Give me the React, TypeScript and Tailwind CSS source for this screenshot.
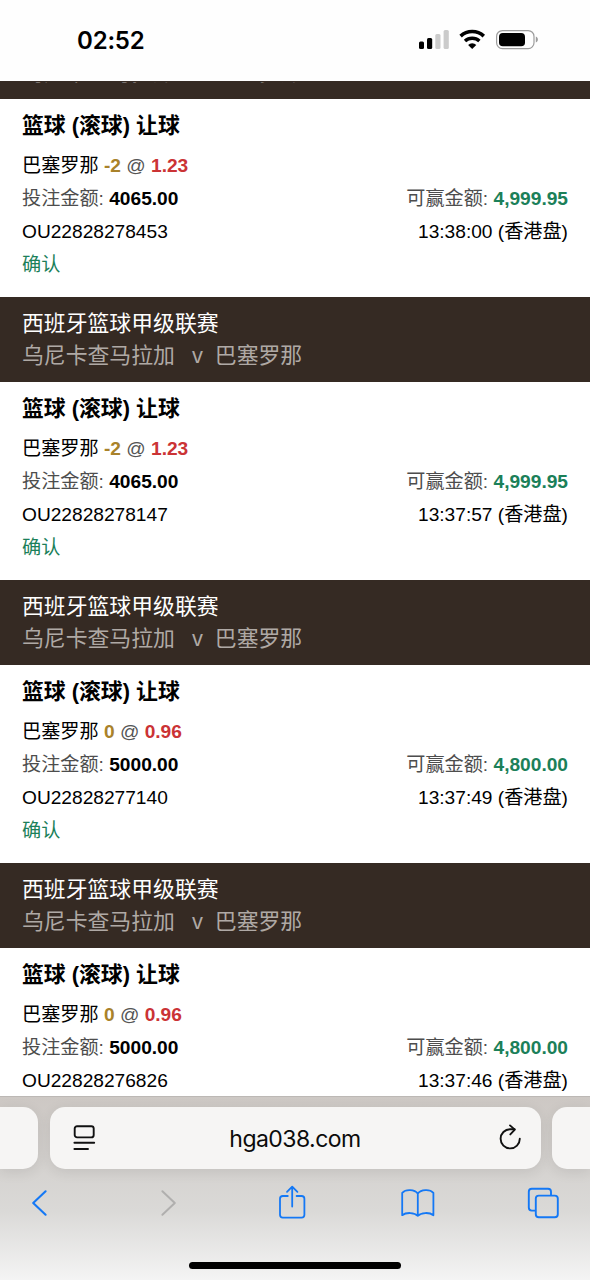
type Bet = {
  id: string;
  handicap: string;
  odds: string;
  stake: string;
  win: string;
  time: string;
};

const bets: Bet[] = [
  { id: "OU22828278453", handicap: "-2", odds: "1.23", stake: "4065.00", win: "4,999.95", time: "13:38:00" },
  { id: "OU22828278147", handicap: "-2", odds: "1.23", stake: "4065.00", win: "4,999.95", time: "13:37:57" },
  { id: "OU22828277140", handicap: "0", odds: "0.96", stake: "5000.00", win: "4,800.00", time: "13:37:49" },
  { id: "OU22828276826", handicap: "0", odds: "0.96", stake: "5000.00", win: "4,800.00", time: "13:37:46" },
];

function StatusBar() {
  return (
    <div className="flex h-[81px] shrink-0 items-start justify-between bg-[#fefefe] pr-[51px] pl-[77px]">
      <span className="pt-[25px] font-['Inter',sans-serif] text-[24px] leading-[32px] font-semibold tracking-[-0.2px] text-black">
        02:52
      </span>
      <svg className="mt-[28px]" width="121" height="24" viewBox="418 28 121 24" fill="none">
        <rect x="419" y="41.5" width="5" height="7.5" rx="1.5" fill="#000" />
        <rect x="427" y="38" width="5.2" height="11" rx="1.5" fill="#000" />
        <rect x="435.3" y="34" width="5.2" height="15" rx="1.5" fill="#cbcbcb" />
        <rect x="443.6" y="30" width="5.2" height="19" rx="1.5" fill="#cbcbcb" />
        <path d="M460.6 36.1a17 17 0 0 1 23.2 0" stroke="#000" strokeWidth="3.6" />
        <path d="M465 41.1a10.6 10.6 0 0 1 14.4 0" stroke="#000" strokeWidth="3.4" />
        <path d="M468.1 44.9a6 6 0 0 1 8.2 0l-4.1 4.2z" fill="#000" />
        <rect x="496.6" y="30.6" width="37.4" height="18" rx="5.8" stroke="#9c9c9c" strokeWidth="1.2" />
        <rect x="499" y="33" width="26" height="13.2" rx="3.8" fill="#000" />
        <path d="M535.8 36.6c2.8 1 2.8 5 0 6z" fill="#9c9c9c" />
      </svg>
    </div>
  );
}

function MatchHeader() {
  return (
    <div className="h-[85px] shrink-0 bg-[#352a23] px-[22px] pt-[11px] text-[21.85px] leading-[32px]">
      <div className="text-white">西班牙篮球甲级联赛</div>
      <div className="flex text-[#afa9a5]">
        <span>乌尼卡查马拉加</span>
        <span className="ml-[17px]">v</span>
        <span className="ml-[12px]">巴塞罗那</span>
      </div>
    </div>
  );
}

function BetCard({ bet }: { bet: Bet }) {
  return (
    <div className="h-[198px] shrink-0 bg-white px-[22px] pt-[10px] text-[19.15px] leading-[33px] text-black">
      <div className="mb-[7px] text-[21.85px] font-bold">篮球 (滚球) 让球</div>
      <div>
        巴塞罗那 <b className="text-[#a9822a]">{bet.handicap}</b>{" "}
        <span className="text-[#555]">@</span> <b className="text-[#cb3335]">{bet.odds}</b>
      </div>
      <div className="flex justify-between text-[#4d4d4d]">
        <span>
          投注金额: <b className="text-black">{bet.stake}</b>
        </span>
        <span>
          可赢金额: <b className="text-[#1b8059]">{bet.win}</b>
        </span>
      </div>
      <div className="flex justify-between">
        <span>{bet.id}</span>
        <span>{bet.time} (香港盘)</span>
      </div>
      <div className="text-[#1b8059]">确认</div>
    </div>
  );
}

function AddressBar() {
  return (
    <div className="flex h-[62px] justify-between">
      <div className="w-[38px] rounded-r-[15px] bg-[#f6f5f4] shadow-[0_3px_14px_rgba(0,0,0,0.09)]" />
      <div className="flex w-[491px] items-center justify-between rounded-[15px] bg-[#f6f5f4] pr-[18px] pl-[23px] shadow-[0_3px_14px_rgba(0,0,0,0.09)]">
        <svg width="24" height="28" viewBox="0 0 24 28" fill="none" stroke="#111" strokeWidth="1.9" strokeLinecap="round">
          <rect x="1.7" y="2.2" width="19" height="11.2" rx="2.4" />
          <path d="M1.4 18.8h19.8M1.4 25h13.6" />
        </svg>
        <span className="mr-[5px] pt-px font-['Inter',sans-serif] text-[23px] leading-[32px] tracking-[-0.55px] text-[#0b0b0b]">
          hga038.com
        </span>
        <svg width="24" height="28" viewBox="498 1124 24 28" fill="none" stroke="#111" strokeWidth="1.9" strokeLinecap="round" strokeLinejoin="round">
          <path d="M519.8 1138.8A9.6 9.6 0 1 1 510.2 1129.2H514.6" />
          <path d="M510 1125.4l4.8 4.2-4.5 4.8" />
        </svg>
      </div>
      <div className="w-[38px] rounded-l-[15px] bg-[#f6f5f4] shadow-[0_3px_14px_rgba(0,0,0,0.09)]" />
    </div>
  );
}

function Toolbar() {
  return (
    <div className="flex h-[40px] items-center pl-[31px]">
      <svg width="18" height="40" viewBox="31 1183 18 40" fill="none" stroke="#1478f5" strokeWidth="2.1" strokeLinecap="round" strokeLinejoin="round">
        <path d="M45.6 1191.3L33.2 1203l12.4 11.7" />
      </svg>
      <svg className="ml-[111px]" width="18" height="40" viewBox="160 1183 18 40" fill="none" stroke="#b0afae" strokeWidth="2" strokeLinecap="round" strokeLinejoin="round">
        <path d="M162.4 1191.3L174.8 1203l-12.4 11.7" />
      </svg>
      <svg className="ml-[100px]" width="28" height="40" viewBox="278 1183 28 40" fill="none" stroke="#1478f5" strokeWidth="1.8" strokeLinecap="round" strokeLinejoin="round">
        <path d="M287.8 1196h-5a2.8 2.8 0 0 0-2.8 2.8v16a2.8 2.8 0 0 0 2.8 2.8h18.800a2.8 2.8 0 0 0 2.8-2.8v-16a2.8 2.8 0 0 0-2.8-2.8h-5" />
        <path d="M292.2 1206.5v-19.6M287 1191.8l5.2-5.2 5.2 5.2" />
      </svg>
      <svg className="ml-[94px]" width="36" height="40" viewBox="400 1183 36 40" fill="none" stroke="#1478f5" strokeWidth="1.8" strokeLinecap="round" strokeLinejoin="round">
        <path d="M417.8 1193.6c-3.2-4.2-12-4.6-15.6-.8v22.4c4-3.2 12.4-2.8 15.6.6 3.2-3.4 11.6-3.8 15.6-.6v-22.4c-3.6-3.8-12.4-3.4-15.6.8zM417.8 1193.6v22.2" />
      </svg>
      <svg className="ml-[90px]" width="34" height="40" viewBox="526 1183 34 40" fill="none" stroke="#1478f5" strokeWidth="1.9" strokeLinejoin="round">
        <path d="M535.6 1210.6h-3.8a3 3 0 0 1-3-3v-15.8a3 3 0 0 1 3-3h16.2a3 3 0 0 1 3 3v3.6" />
        <rect x="535.8" y="1195.6" width="22" height="21.6" rx="3" />
      </svg>
    </div>
  );
}

export default function App() {
  return (
    <div className="flex h-[1280px] w-[590px] flex-col overflow-hidden bg-white font-['Liberation_Sans','Noto_Sans_CJK_SC',sans-serif]">
      <StatusBar />
      <main className="h-[1015px] shrink-0 overflow-hidden border-t border-[#352a23]">
        {/* first header is mostly scrolled under the status bar */}
        <div className="-mt-[68px] flex flex-col">
          {bets.map((bet) => (
            <div key={bet.id} className="flex flex-col">
              <MatchHeader />
              <BetCard bet={bet} />
            </div>
          ))}
        </div>
      </main>
      <footer className="flex h-[184px] shrink-0 flex-col border-t border-[#bcb8b5] bg-linear-to-b from-[#cdc8c4] via-[#dad9d7] via-62% to-[#f4f4f4] pt-[10px]">
        <AddressBar />
        <div className="mt-[14px]">
          <Toolbar />
        </div>
        <div className="mx-auto mt-[39px] h-[7px] w-[212px] rounded-full bg-black" />
      </footer>
    </div>
  );
}
